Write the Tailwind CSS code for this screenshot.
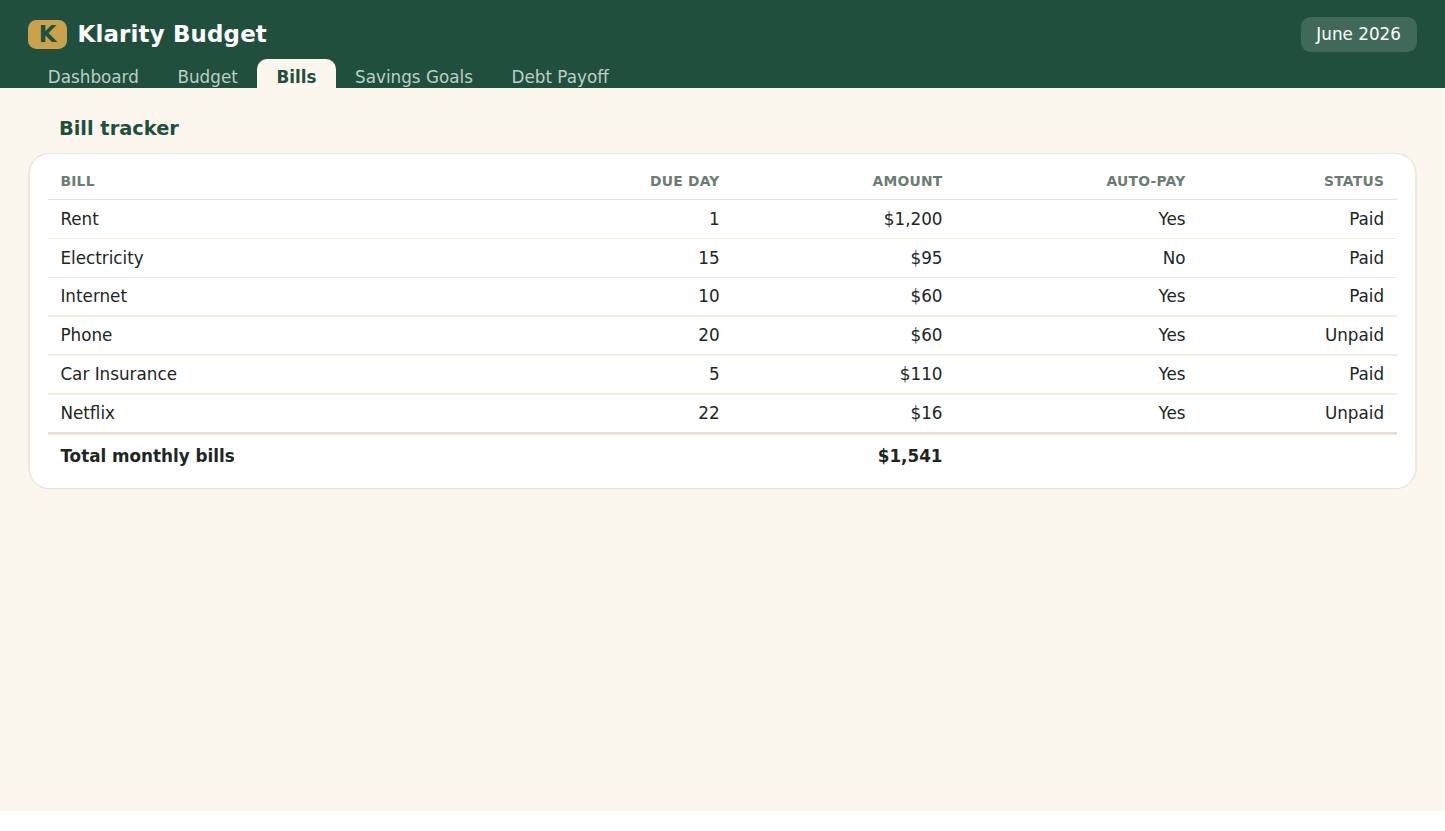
<!DOCTYPE html>
<html lang="en">
<head>
<meta charset="utf-8">
<title>Klarity Budget</title>
<script src="https://cdn.jsdelivr.net/npm/@tailwindcss/browser@4"></script>
</head>
<body class="bg-white font-['DejaVu_Sans',sans-serif] text-[16.8px] leading-5 text-[#20261f]">
<div class="h-[811px] bg-[#fbf6ee]">
  <header class="flex h-[88.4px] flex-col bg-[#204f3d]">
    <div class="flex h-[59px] shrink-0 items-center justify-between pr-[28.5px] pl-[28.2px] pt-[9px]">
      <div class="flex items-center gap-[10.6px]">
        <div class="flex h-[29px] w-[38.7px] items-center justify-center rounded-[8.5px] bg-[#c9a24b] text-[22.9px] font-bold text-[#204f3d]">K</div>
        <h1 class="text-[22.9px] font-bold tracking-[0.18px] text-white">Klarity Budget</h1>
      </div>
      <div class="flex h-[35px] w-[115.7px] items-center justify-center rounded-[9.6px] bg-white/15 text-white">June 2026</div>
    </div>
    <nav class="flex h-[29.4px] items-stretch pl-[28.5px] text-[#bcd0c6]">
      <a class="px-[19.3px] pt-[8px]">Dashboard</a>
      <a class="px-[19.3px] pt-[8px]">Budget</a>
      <a class="rounded-t-[10px] bg-[#fbf6ee] px-[19.3px] pt-[8px] font-bold text-[#204f3d]">Bills</a>
      <a class="px-[19.3px] pt-[8px]">Savings Goals</a>
      <a class="px-[19.3px] pt-[8px]">Debt Payoff</a>
    </nav>
  </header>
  <main class="px-[28px] pt-[30.6px]">
    <h2 class="pl-[30.9px] text-[19.4px] font-bold text-[#1f4f3d]">Bill tracker</h2>
    <section class="mt-[14px] h-[336px] rounded-[21px] border-x-2 border-y border-x-[#efe9dd] border-y-[#e9e2d4] bg-white px-[18px]">
      <table class="w-full table-fixed border-separate border-spacing-0 text-right [&_td]:p-0 [&_th]:p-0 [&_td]:border-[#f2ecdf]">
        <colgroup><col class="w-[684px]"><col class="w-[222.5px]"><col class="w-[243px]"><col></colgroup>
        <thead class="text-[13.85px] tracking-[0.25px] text-[#6b7d72]">
          <tr class="h-[46px] align-top *:border-b *:border-[#e9e2d4]"><th><div class="flex justify-between px-[12.4px] pt-[17px]"><span>BILL</span><span>DUE DAY</span></div></th><th><div class="px-3 pt-[17px]">AMOUNT</div></th><th><div class="px-3 pt-[17px]">AUTO-PAY</div></th><th><div class="pr-[12.9px] pt-[17px]">STATUS</div></th></tr>
        </thead>
        <tbody>
          <tr class="h-[39px] *:border-b"><td><div class="flex justify-between px-[12.4px]"><span>Rent</span><span>1</span></div></td><td><div class="px-3">$1,200</div></td><td><div class="px-3">Yes</div></td><td><div class="pr-[12.9px]">Paid</div></td></tr>
          <tr class="h-[39px] *:border-b"><td><div class="flex justify-between px-[12.4px]"><span>Electricity</span><span>15</span></div></td><td><div class="px-3">$95</div></td><td><div class="px-3">No</div></td><td><div class="pr-[12.9px]">Paid</div></td></tr>
          <tr class="h-[39px] *:border-b-2"><td><div class="flex justify-between px-[12.4px]"><span>Internet</span><span>10</span></div></td><td><div class="px-3">$60</div></td><td><div class="px-3">Yes</div></td><td><div class="pr-[12.9px]">Paid</div></td></tr>
          <tr class="h-[39px] *:border-b-2"><td><div class="flex justify-between px-[12.4px]"><span>Phone</span><span>20</span></div></td><td><div class="px-3">$60</div></td><td><div class="px-3">Yes</div></td><td><div class="pr-[12.9px]">Unpaid</div></td></tr>
          <tr class="h-[39px] *:border-b-2"><td><div class="flex justify-between px-[12.4px]"><span>Car Insurance</span><span>5</span></div></td><td><div class="px-3">$110</div></td><td><div class="px-3">Yes</div></td><td><div class="pr-[12.9px]">Paid</div></td></tr>
          <tr class="h-[39px] *:border-b-2 *:!border-[#e6dfd1]"><td><div class="flex justify-between px-[12.4px]"><span>Netflix</span><span>22</span></div></td><td><div class="px-3">$16</div></td><td><div class="px-3">Yes</div></td><td><div class="pr-[12.9px]">Unpaid</div></td></tr>
          <tr class="h-[44px] font-bold *:border-t *:!border-[#f2ecdf]"><td><div class="px-[12.4px] text-left">Total monthly bills</div></td><td><div class="px-3">$1,541</div></td><td></td><td></td></tr>
        </tbody>
      </table>
    </section>
  </main>
</div>
</body>
</html>
